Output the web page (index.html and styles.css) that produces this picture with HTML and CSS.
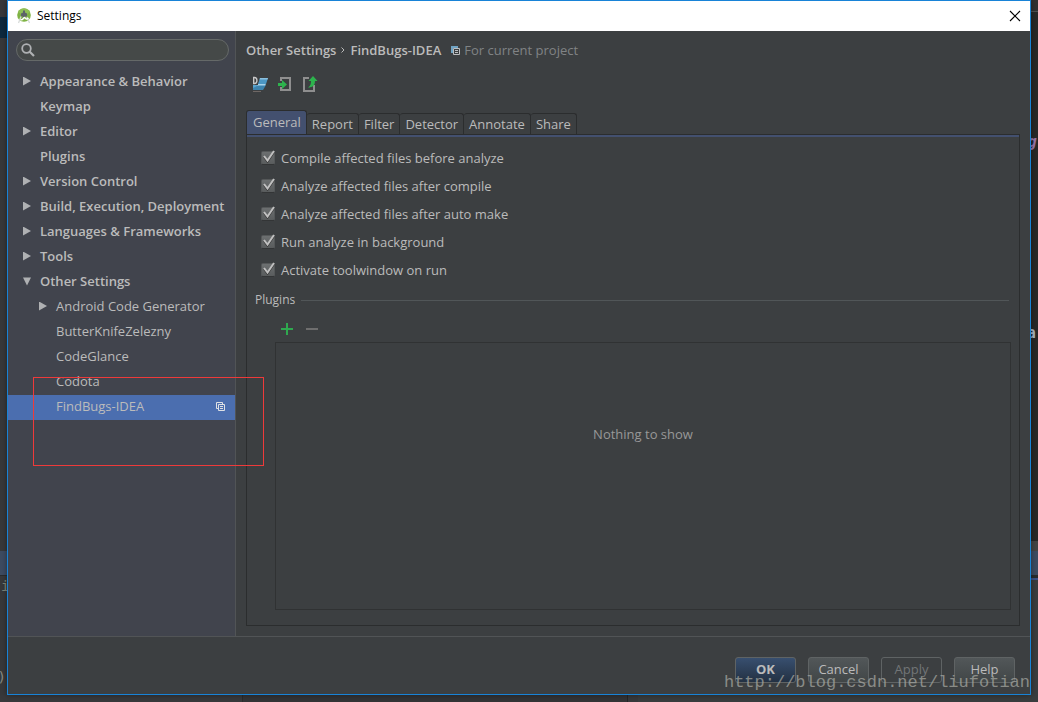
FILE: index.html
```html
<!DOCTYPE html>
<html lang="en">
<head>
<meta charset="utf-8">
<title>Settings</title>
<link rel="stylesheet" href="styles.css">
</head>
<body>
<div class="desktop" aria-hidden="true">
  <div class="edge edge-left">
    <span class="band band-nav"></span>
    <span class="band band-tool"></span>
    <span class="code code-it">it</span>
    <span class="code code-end">s)</span>
  </div>
  <div class="edge edge-right">
    <span class="band band-top"></span>
    <span class="code code-g">g</span>
    <span class="code code-a">a</span>
    <span class="band band-dock"></span>
  </div>
  <div class="edge edge-bottom"><span class="dock-a"></span><span class="dock-b"></span><span class="dock-c"></span></div>
</div>

<div class="dialog" role="dialog" aria-labelledby="dialog-title">
  <header class="titlebar">
    <svg class="logo" viewBox="0 0 16 16" width="16" height="16" aria-hidden="true">
      <circle cx="8" cy="7" r="6.800" fill="#7fb344"/>
      <path d="M2 4a7 7 0 0 1 12 0l-3 2H5z" fill="#8fc055"/>
      <path d="M7 2.500h2v2l2 1v3l-1.500-.5v1.500h-3V8L5 8.500v-3l2-1z" fill="#5d6468"/>
      <path d="M5 8.500 2.500 15M11 9l2.500 6" stroke="#d8dcda" stroke-width="1.300" fill="none"/>
      <path d="M4.500 11.500c2 1.500 3-2 4-2s1 3 4 .5" stroke="#fff" stroke-width="1.500" fill="none"/>
    </svg>
    <h1 class="title" id="dialog-title">Settings</h1>
    <button class="close" type="button" aria-label="Close">
      <svg viewBox="0 0 12 12" width="12" height="12"><path d="M1 1l10 10M11 1 1 11" stroke="#000" stroke-width="1.100"/></svg>
    </button>
  </header>

  <div class="main">
    <nav class="sidebar" aria-label="Settings sections">
      <label class="search">
        <svg viewBox="0 0 14 14" width="14" height="14" aria-hidden="true"><circle cx="5.500" cy="5.500" r="4.300" fill="none" stroke="#afb1b3" stroke-width="1.800"/><path d="M8.500 8.500 13 13" stroke="#afb1b3" stroke-width="2.200"/></svg>
        <input class="search-input" type="text" aria-label="Search settings">
      </label>
      <ul class="tree">
        <li><button class="node arrow" type="button">Appearance &amp; Behavior</button></li>
        <li><button class="node" type="button">Keymap</button></li>
        <li><button class="node arrow" type="button">Editor</button></li>
        <li><button class="node" type="button">Plugins</button></li>
        <li><button class="node arrow" type="button">Version Control</button></li>
        <li><button class="node arrow" type="button">Build, Execution, Deployment</button></li>
        <li><button class="node arrow" type="button">Languages &amp; Frameworks</button></li>
        <li><button class="node arrow" type="button">Tools</button></li>
        <li><button class="node arrow open" type="button" aria-expanded="true">Other Settings</button>
          <ul class="subtree">
            <li><button class="node arrow" type="button">Android Code Generator</button></li>
            <li><button class="node" type="button">ButterKnifeZelezny</button></li>
            <li><button class="node" type="button">CodeGlance</button></li>
            <li><button class="node" type="button">Codota</button></li>
            <li><button class="node selected" type="button">FindBugs-IDEA
              <svg class="scope" viewBox="0 0 9 9" width="9" height="9" aria-hidden="true"><path d="M2.500 6.500h-2v-6h6v2M2.500 2.500h6v6h-6zM4 4.500h3M4 6.500h3" fill="none" stroke="#dfe1e5"/></svg>
            </button></li>
          </ul>
        </li>
      </ul>
      <div class="highlight"></div>
    </nav>

    <main class="content">
      <div class="crumbs">
        <span class="crumb">Other Settings</span>
        <svg viewBox="0 0 4 6" width="4" height="6" aria-hidden="true"><path d="M.5.5 3 3 .5 5.500" fill="none" stroke="#bbb"/></svg>
        <span class="crumb">FindBugs-IDEA</span>
        <span class="scope-note">
          <svg viewBox="0 0 9 9" width="9" height="9" aria-hidden="true"><path d="M0 0h7v2H2v5H0z" fill="#6fa3c4"/><path d="M2.500 2.500h6v6h-6zM4 4.500h3M4 6.500h3" fill="none" stroke="#bcbec0"/></svg>
          For current project
        </span>
      </div>

      <div class="toolbar">
        <button class="tool" type="button" aria-label="Restore defaults">
          <svg viewBox="0 0 16 16" width="16" height="16"><path d="M8 2h8l-2 6H6z" fill="#4c97c4"/><path d="M8 2h8l-.5 1.500H7.500z" fill="#8cc0de"/><path d="M1 9h6v5H1z" fill="#58a5d1"/><path d="M1 12 7 9h7l-3 5H1z" fill="#3d83ae"/><path d="M6 8h8l-1 1.500H5z" fill="#a8d3eb"/><path d="M0 0h6v9H0z" fill="#3c3f41"/><path d="M1.700 1.500v6M1 1.500h1.500c3.200 0 3.200 6 0 6H1" fill="none" stroke="#c8c8c8" stroke-width="1.400"/><path d="M1 15.500h8" stroke="#6f6865"/></svg>
        </button>
        <button class="tool" type="button" aria-label="Import settings">
          <svg viewBox="0 0 16 16" width="16" height="16"><path d="M4 5V2h9v12H4v-3" fill="none" stroke="#8f8f8f" stroke-width="2"/><path d="M0 7h5V4l5.500 4.500L5 13v-3H0z" fill="#3c3f41"/><path d="M1 7h4V4l5 4.500L5 13v-3H1z" fill="#2db34d"/></svg>
        </button>
        <button class="tool" type="button" aria-label="Export settings">
          <svg viewBox="0 0 16 16" width="16" height="16"><path d="M7 2H2v13h10V9" fill="none" stroke="#8f8f8f" stroke-width="2"/><path d="M11 0 6.500 5H9c0 3-.5 5-3 6.500 4.500 0 7-2 7-6.500h2.500z" fill="#2db34d"/></svg>
        </button>
      </div>

      <div class="tabs" role="tablist">
        <button class="tab active" type="button" role="tab" aria-selected="true">General</button>
        <button class="tab" type="button" role="tab">Report</button>
        <button class="tab" type="button" role="tab">Filter</button>
        <button class="tab" type="button" role="tab">Detector</button>
        <button class="tab" type="button" role="tab">Annotate</button>
        <button class="tab" type="button" role="tab">Share</button>
      </div>

      <section class="panel" role="tabpanel">
        <div class="options">
          <label class="option"><span class="check"><input type="checkbox" checked><svg viewBox="0 0 16 16" width="16" height="16"><path d="M4 7l3.500 4.500L14 2" class="mark-shadow"/><path d="M4 6l3.500 4.500L14 1" class="mark"/></svg></span>Compile affected files before analyze</label>
          <label class="option"><span class="check"><input type="checkbox" checked><svg viewBox="0 0 16 16" width="16" height="16"><path d="M4 7l3.500 4.500L14 2" class="mark-shadow"/><path d="M4 6l3.500 4.500L14 1" class="mark"/></svg></span>Analyze affected files after compile</label>
          <label class="option"><span class="check"><input type="checkbox" checked><svg viewBox="0 0 16 16" width="16" height="16"><path d="M4 7l3.500 4.500L14 2" class="mark-shadow"/><path d="M4 6l3.500 4.500L14 1" class="mark"/></svg></span>Analyze affected files after auto make</label>
          <label class="option"><span class="check"><input type="checkbox" checked><svg viewBox="0 0 16 16" width="16" height="16"><path d="M4 7l3.500 4.500L14 2" class="mark-shadow"/><path d="M4 6l3.500 4.500L14 1" class="mark"/></svg></span>Run analyze in background</label>
          <label class="option"><span class="check"><input type="checkbox" checked><svg viewBox="0 0 16 16" width="16" height="16"><path d="M4 7l3.500 4.500L14 2" class="mark-shadow"/><path d="M4 6l3.500 4.500L14 1" class="mark"/></svg></span>Activate toolwindow on run</label>
        </div>
        <h2 class="group-title">Plugins</h2>
        <div class="plugins">
          <div class="plugin-tools">
            <button class="small-tool" type="button" aria-label="Add plugin"><svg viewBox="0 0 12 12" width="12" height="12"><path d="M6 0v12M0 6h12" stroke="#2fa84f" stroke-width="2"/></svg></button>
            <button class="small-tool" type="button" aria-label="Remove plugin" disabled><svg viewBox="0 0 12 12" width="12" height="12"><path d="M0 6h12" stroke="#6e6e6e" stroke-width="2"/></svg></button>
          </div>
          <div class="plugin-list"><p class="empty">Nothing to show</p></div>
        </div>
      </section>
    </main>
  </div>

  <footer class="footer">
    <button class="btn primary" type="button">OK</button>
    <button class="btn" type="button">Cancel</button>
    <button class="btn" type="button" disabled>Apply</button>
    <button class="btn" type="button">Help</button>
  </footer>
</div>
<div class="watermark">http://blog.csdn.net/liufotian</div>
</body>
</html>
```

FILE: styles.css
```css
* { box-sizing: border-box; }

body {
  margin: 0;
  height: 100vh;
  display: flex;
  position: relative;
  overflow: hidden;
  background: #37393b;
  color: #bbbbbb;
  font: 13px/20px "Open Sans", "Noto Sans", sans-serif;
}

button, input { font: inherit; color: inherit; }
button { background: none; border: 0; padding: 0; }
ul { list-style: none; margin: 0; padding: 0; }
svg { display: block; flex: none; }

/* Editor window visible behind the dialog */
.desktop { position: absolute; inset: 0; }
.edge { position: absolute; overflow: hidden; }
.edge-left { left: 0; top: 0; bottom: 0; width: 7px; background: #37383a; }
.edge-right { right: 0; top: 0; bottom: 0; width: 7px; background: linear-gradient(#282828 541px, #393d3f 541px); }
.edge-bottom { left: 0; right: 0; bottom: 0; height: 7px; display: flex; }
.dock-a { width: 243px; background: #38393b; border-right: 1px solid #2a2b2c; }
.dock-b { width: 385px; background: #333436; border-right: 1px solid #252627; }
.dock-c { flex: 1; margin-left: 10px; background: #393d3e; }
.band { position: absolute; left: 0; right: 0; }
.band-nav { top: 17px; height: 21px; background: #0d293e; }
.band-tool { top: 551px; height: 25px; background: #3d4b61; border-bottom: 1px solid #292b2d; }
.band-top { top: 0; height: 12px; background: #303132; border-bottom: 1px solid #505152; }
.band-dock { top: 541px; height: 39px; background: linear-gradient(#434445 10px, #3d4b61 10px 34px, #292b2d 34px 37px, #3c5288 37px); }
.code { position: absolute; font-family: "DejaVu Sans Mono", monospace; font-size: 14px; }
.code-it { left: 1px; top: 576px; color: #7f8578; }
.code-end { right: 1px; top: 667px; color: #898c82; }
.code-g { right: 1px; top: 132px; color: #9876aa; font-size: 16px; font-style: italic; font-weight: bold; }
.code-a { right: 2px; top: 323px; color: #a9b7c6; font-size: 16px; font-weight: bold; }

.dialog {
  position: relative;
  flex: 1;
  display: flex;
  flex-direction: column;
  margin: 0 7px 7px;
  border: 1px solid #1883d7;
  background: #3c3f41;
  box-shadow: 0 0 6px #0006;
}

.titlebar {
  display: flex;
  align-items: center;
  height: 30px;
  padding: 0 9px 0 8px;
  gap: 5px;
  background: #fff;
  color: #000;
}
.title { margin: 0; flex: 1; font-size: 12px; font-weight: 400; }
.close { display: grid; place-items: center; }

.main { flex: 1; display: flex; min-height: 0; }

.sidebar {
  position: relative;
  width: 228px;
  flex: none;
  padding-top: 8px;
  background: #41444d;
  border-right: 1px solid #515456;
}
.search {
  display: flex;
  align-items: center;
  height: 22px;
  margin: 0 6px 9px 8px;
  padding: 0 8px 0 4px;
  border: 1px solid #656968;
  border-radius: 11px;
  background: #454948;
}
.search-input { flex: 1; min-width: 0; padding: 0 4px; background: none; border: 0; outline: 0; }

.node {
  display: flex;
  align-items: center;
  width: 100%;
  height: 25px;
  padding: 0 10px 3px 15px;
  font-weight: 600;
  white-space: nowrap;
  text-align: left;
}
.node::before { content: ""; width: 8px; height: 9px; margin-right: 9px; flex: none; }
.arrow::before { background: #afb1b3; clip-path: polygon(0 0, 100% 50%, 0 100%); }
.arrow.open::before { clip-path: polygon(0 10%, 100% 10%, 50% 100%); }
.subtree .node { padding-left: 31px; font-weight: 400; }
.selected { background: #4b6eaf; }
.scope { margin-left: auto; }
.highlight {
  position: absolute;
  left: 25px;
  top: 346px;
  width: 231px;
  height: 89px;
  border: 1px solid #ee3a3a;
  z-index: 1;
}

.content { flex: 1; min-width: 0; display: flex; flex-direction: column; padding: 9px 10px 10px; }
.crumbs { display: flex; align-items: center; gap: 5px; height: 20px; }
.crumb { font-weight: 600; }
.scope-note { display: flex; align-items: center; gap: 4px; margin-left: 5px; color: #808385; }
.toolbar { display: flex; gap: 9px; padding: 16px 0 0 6px; height: 51px; }
.tool { width: 16px; height: 16px; }

.tabs { display: flex; align-items: flex-end; height: 23px; }
.tab {
  height: 21px;
  padding: 0 5px;
  border: 1px solid #2b2d2e;
  border-bottom: 0;
  border-left-width: 0;
  border-radius: 3px 3px 0 0;
}
.tab.active { height: 24px; padding: 0 5px 1px 6px; border-left-width: 1px; background: #43506f; }

.panel {
  flex: 1;
  display: flex;
  flex-direction: column;
  padding: 9px 8px 15px;
  border: 1px solid #2b2d2e;
  box-shadow: inset 0 2px #43506f;
}
.options { display: flex; flex-direction: column; padding-left: 5px; }
.option { display: flex; align-items: center; gap: 5px; height: 28px; }
.check { display: grid; width: 16px; height: 16px; }
.check > * { grid-area: 1 / 1; }
.check input {
  appearance: none;
  width: 14px;
  height: 14px;
  margin: 1px 0 0 1px;
  border: 1px solid #555859;
  border-bottom-color: #333536;
  border-radius: 2px;
  background: linear-gradient(#6c6f70, #595c5d);
}
.check svg { pointer-events: none; }
.mark, .mark-shadow { fill: none; stroke-width: 2; }
.mark { stroke: #c0c0c0; }
.mark-shadow { stroke: #333; }

.group-title { display: flex; align-items: center; gap: 6px; margin: 6px 0 0; font-size: 12px; line-height: 20px; font-weight: 400; }
.group-title::after { content: ""; flex: 1; height: 1px; background: #515658; margin-right: 2px; }
.plugins { flex: 1; display: flex; flex-direction: column; padding-left: 20px; }
.plugin-tools { display: flex; gap: 13px; padding: 13px 0 0 6px; height: 32px; }
.small-tool { width: 12px; height: 12px; }
.plugin-list { flex: 1; border: 1px solid #303233; display: flex; flex-direction: column; align-items: center; }
.empty { margin: auto; padding-bottom: 84px; color: #989898; }

.footer {
  display: flex;
  justify-content: flex-end;
  gap: 12px;
  height: 58px;
  padding: 20px 15px 0;
  border-top: 1px solid #515456;
}
.btn {
  width: 61px;
  height: 26px;
  padding-bottom: 2px;
  border: 1px solid #5f6364;
  border-radius: 3px;
  background: linear-gradient(#525759, #414647);
}
.btn.primary { background: linear-gradient(#384f6f, #233143); font-weight: 700; }
.btn:disabled { background: none; color: #727577; }

.watermark {
  position: absolute;
  right: 8px;
  bottom: 8px;
  color: #a3a59f;
  font: 17px/22px "Liberation Mono", monospace;
  opacity: .75;
  pointer-events: none;
}
```
